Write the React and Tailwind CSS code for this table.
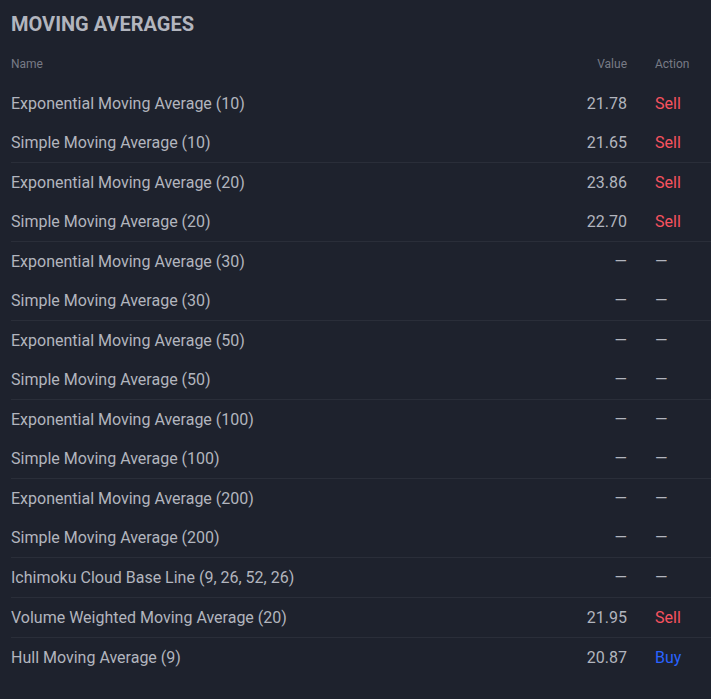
const GROUPS = [
  [
    { name: "Exponential Moving Average (10)", value: "21.78", action: "Sell" },
    { name: "Simple Moving Average (10)", value: "21.65", action: "Sell" },
  ],
  [
    { name: "Exponential Moving Average (20)", value: "23.86", action: "Sell" },
    { name: "Simple Moving Average (20)", value: "22.70", action: "Sell" },
  ],
  [
    { name: "Exponential Moving Average (30)" },
    { name: "Simple Moving Average (30)" },
  ],
  [
    { name: "Exponential Moving Average (50)" },
    { name: "Simple Moving Average (50)" },
  ],
  [
    { name: "Exponential Moving Average (100)" },
    { name: "Simple Moving Average (100)" },
  ],
  [
    { name: "Exponential Moving Average (200)" },
    { name: "Simple Moving Average (200)" },
  ],
  [{ name: "Ichimoku Cloud Base Line (9, 26, 52, 26)" }],
  [{ name: "Volume Weighted Moving Average (20)", value: "21.95", action: "Sell" }],
  [{ name: "Hull Moving Average (9)", value: "20.87", action: "Buy" }],
];

const ACTION_CLASSES = {
  Sell: "text-[#f7525f]",
  Buy: "text-[#2962ff]",
};

function Row({ row }) {
  return (
    <div className="flex h-[39px] items-center text-base">
      <div className="min-w-0 flex-1 truncate">{row.name}</div>
      <div className="pr-[28px] text-right">{row.value || "—"}</div>
      <div className={`w-[56px] ${ACTION_CLASSES[row.action] || ""}`}>
        {row.action || "—"}
      </div>
    </div>
  );
}

export default function App() {
  return (
    <div className="min-h-[699px] bg-[#1e222d] pl-[11px] font-['Roboto',sans-serif] text-[#b2b5be]">
      <h2 className="pt-[10px] pb-[7px] text-[20px] leading-[28px] font-bold">
        MOVING AVERAGES
      </h2>

      <div className="flex h-[39px] items-center pb-[2px] text-xs text-[#787b86]">
        <div className="flex-1">Name</div>
        <div className="pr-[28px] text-right">Value</div>
        <div className="w-[56px]">Action</div>
      </div>

      {GROUPS.map((group, index) => (
        <div
          key={index}
          className={index === 0 ? "" : "border-t border-[#2a2e39]"}
        >
          {group.map((row) => (
            <Row key={row.name} row={row} />
          ))}
        </div>
      ))}
    </div>
  );
}
